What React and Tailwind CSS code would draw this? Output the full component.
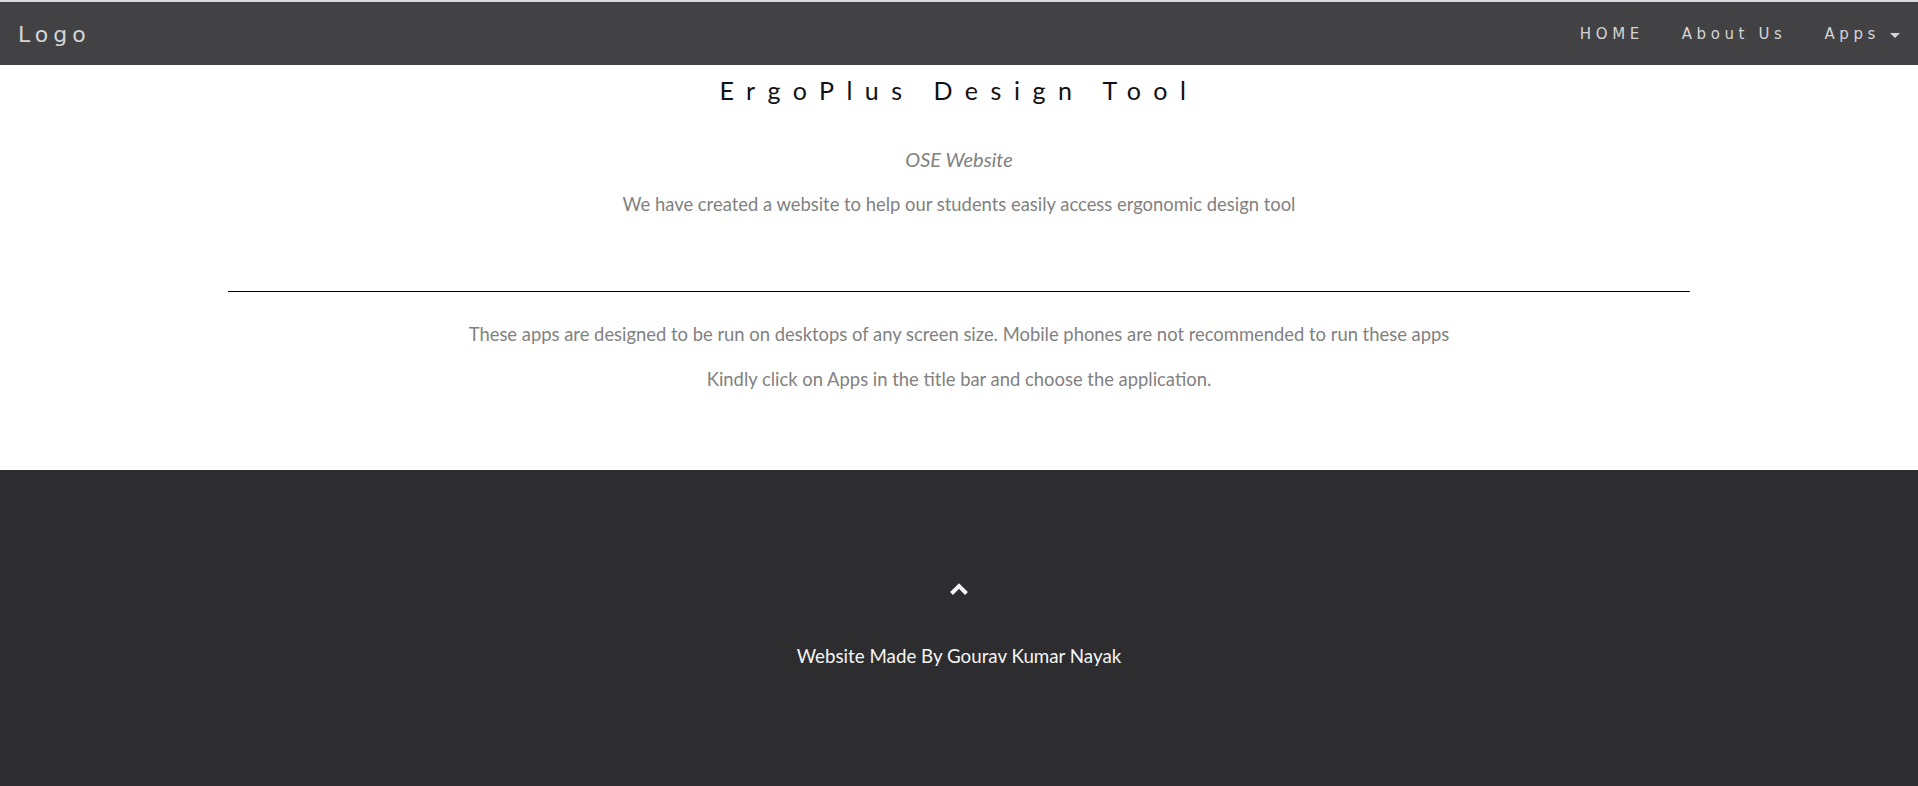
export default function App() {
  return (
    <div className="min-h-[786px] flex flex-col bg-white font-['Lato','Liberation_Sans',sans-serif]">
      <div className="h-[2px] bg-[#d9d9d9]" />
      <nav className="h-[63px] bg-[#424245] flex items-center justify-between pt-[2px] font-['DejaVu_Sans',sans-serif] text-[#d5d5d5]">
        <span className="pl-[18px] text-[22px] tracking-[5px]">Logo</span>
        <ul className="flex items-center text-[15px] tracking-[4.6px]">
          <li className="px-[19px]">HOME</li>
          <li className="px-[19px]">About Us</li>
          <li className="pl-[19px] pr-[18px] flex items-center">
            Apps
            <span className="ml-[10px] w-0 h-0 border-t-[5px] border-x-[5px] border-x-transparent border-t-[#d5d5d5] mt-[2px]" />
          </li>
        </ul>
      </nav>

      <section className="text-center pt-[11px] pb-[74px]">
        <h3 className="text-[25px] leading-[28px] tracking-[12.5px] text-[#111] mb-[38px]">ErgoPlus Design Tool</h3>
        <p className="text-[20px] leading-[34px] text-[#818181] italic">OSE Website</p>
        <p className="text-[18.4px] leading-[34px] text-[#818181] mt-[11px]">
          We have created a website to help our students easily access ergonomic design tool
        </p>
        <hr className="mt-[70px] w-[1462px] mx-auto border-0 border-t border-black" />
        <p className="text-[18.4px] leading-[34px] text-[#818181] mt-[25px]">
          These apps are designed to be run on desktops of any screen size. Mobile phones are not recommended to run these apps
        </p>
        <p className="text-[18.4px] leading-[34px] text-[#818181] mt-[11px]">
          Kindly click on Apps in the title bar and choose the application.
        </p>
      </section>

      <footer className="flex-1 bg-[#2d2d30] text-center pt-[113px]">
        <svg className="mx-auto block" width="20" height="12" viewBox="0 0 20 12">
          <path d="M2.5 10.5 L10 3 L17.5 10.5" fill="none" stroke="#f5f5f5" strokeWidth="4" strokeLinejoin="miter" />
        </svg>
        <p className="mt-[44px] text-[18.75px] leading-[34px] text-[#f5f5f5]">Website Made By Gourav Kumar Nayak</p>
      </footer>
    </div>
  )
}
